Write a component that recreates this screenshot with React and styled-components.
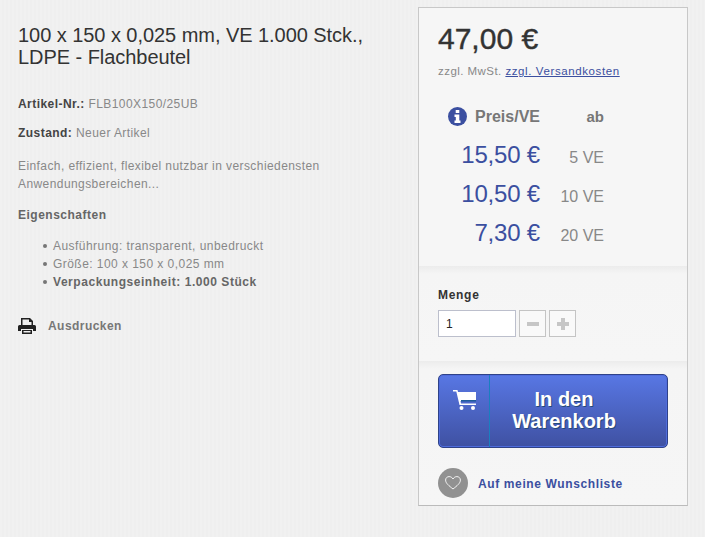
import React from "react";
import styled, { createGlobalStyle } from "styled-components";

const GlobalStyle = createGlobalStyle`
  html, body {
    margin: 0;
    padding: 0;
    height: 100%;
    overflow: hidden;
  }
  body {
    background: repeating-linear-gradient(90deg, #f1f1f1 0, #f1f1f1 2px, #efefef 2px, #efefef 4px);
    font-family: "Liberation Sans", Arial, sans-serif;
    color: #777;
  }
`;

const Page = styled.div`
  display: flex;
  align-items: flex-start;
  width: 705px;
  height: 537px;
  padding-top: 7px;
  box-sizing: border-box;
`;

const Details = styled.div`
  width: 400px;
  padding: 17px 0 0 18px;
  box-sizing: border-box;
`;

const Title = styled.h1`
  margin: 0 0 27px;
  font-size: 20px;
  line-height: 22px;
  font-weight: 400;
  letter-spacing: -0.05px;
  color: #333;
`;

const Line = styled.p`
  margin: 0 0 ${({ $gap }) => $gap || 11}px;
  font-size: 12px;
  line-height: 18px;
  letter-spacing: 0.42px;
  color: #888;
`;

const Strong = styled.strong`
  color: #444;
  letter-spacing: 0.45px;
`;

const Heading = styled.h4`
  margin: 0 0 13px;
  font-size: 12px;
  line-height: 18px;
  font-weight: 700;
  letter-spacing: 0.5px;
  color: #666;
`;

const List = styled.ul`
  margin: 0 0 27px;
  padding: 0 0 0 25px;
  list-style: none;
  font-size: 12px;
  line-height: 18px;
  letter-spacing: 0.45px;
  color: #888;
`;

const Item = styled.li`
  display: flex;
  align-items: center;
  gap: 6px;
  font-weight: ${({ $bold }) => ($bold ? 700 : 400)};
  letter-spacing: ${({ $bold }) => ($bold ? 0.55 : 0.45)}px;
  color: ${({ $bold }) => ($bold ? "#666" : "#888")};

  &::before {
    content: "";
    width: 4px;
    height: 4px;
    border-radius: 50%;
    background: #777;
  }
`;

const PrintRow = styled.div`
  display: flex;
  align-items: center;
  gap: 12px;
  font-size: 12px;
  font-weight: 700;
  letter-spacing: 0.45px;
  color: #777;
`;

const Panel = styled.aside`
  width: 270px;
  height: 499px;
  margin-left: 18px;
  box-sizing: border-box;
  border: 1px solid #c8c8c8;
  border-bottom-color: #bbb;
  background: #f6f6f6;
  overflow: hidden;
`;

const PriceBox = styled.section`
  height: 258px;
  padding: 14px 19px 0;
  box-sizing: border-box;
`;

const MainPrice = styled.div`
  font-size: 30px;
  line-height: 34px;
  font-weight: 400;
  color: #333;
  -webkit-text-stroke: 0.4px #333;
`;

const Tax = styled.div`
  margin-top: 7px;
  font-size: 11.5px;
  line-height: 16px;
  letter-spacing: 0.45px;
  color: #888;
`;

const TaxLink = styled.a`
  color: #3b4fa0;
  letter-spacing: 0.6px;
  text-decoration: underline;
`;

const PriceTable = styled.div`
  display: grid;
  grid-template-columns: 102px 64px;
  margin-top: 19px;
`;

const HeadPrice = styled.div`
  display: flex;
  align-items: center;
  justify-content: flex-end;
  gap: 8px;
  height: 37px;
  font-size: 16px;
  font-weight: 700;
  color: #777;
`;

const HeadQty = styled.div`
  height: 37px;
  line-height: 37px;
  text-align: right;
  font-size: 15px;
  font-weight: 700;
  color: #777;
`;

const TierPrice = styled.div`
  height: 39px;
  line-height: 39px;
  text-align: right;
  font-size: 24px;
  letter-spacing: -0.2px;
  color: #3b4fa0;
`;

const TierQty = styled.div`
  height: 39px;
  padding-top: 3px;
  box-sizing: border-box;
  line-height: 39px;
  text-align: right;
  font-size: 16px;
  color: #888;
`;

const QtyBox = styled.section`
  height: 95px;
  padding: 21px 19px 0;
  box-sizing: border-box;
  background: linear-gradient(180deg, #ececec 0, #f5f5f5 8px, #f6f6f6 100%);
`;

const QtyLabel = styled.label`
  display: block;
  font-size: 12px;
  line-height: 16px;
  font-weight: 700;
  letter-spacing: 0.7px;
  color: #333;
`;

const QtyRow = styled.div`
  display: flex;
  gap: 3px;
  margin-top: 7px;
`;

const QtyInput = styled.input`
  width: 78px;
  height: 27px;
  padding: 0 7px;
  box-sizing: border-box;
  border: 1px solid #bcbfcc;
  background: #fff;
  font-family: "Liberation Sans", Arial, sans-serif;
  font-size: 12px;
  color: #222;
  outline: none;
`;

const StepButton = styled.button`
  display: flex;
  align-items: center;
  justify-content: center;
  width: 27px;
  height: 27px;
  padding: 0;
  box-sizing: border-box;
  border: 1px solid #c4c4c4;
  background: #f9f9f9;
`;

const BuyBox = styled.section`
  height: 144px;
  padding: 13px 19px 0;
  box-sizing: border-box;
  background: linear-gradient(180deg, #ececec 0, #f5f5f5 8px, #f6f6f6 100%);
`;

const BuyButton = styled.button`
  display: flex;
  width: 230px;
  height: 74px;
  padding: 0;
  box-sizing: border-box;
  border: 1px solid #2f4288;
  border-radius: 5px;
  background: linear-gradient(180deg, #5877e4 0, #3f51a2 100%);
  box-shadow: inset 0 0 0 1px #4f6cdc;
  color: #fff;
  font-family: "Liberation Sans", Arial, sans-serif;
`;

const CartCell = styled.span`
  display: flex;
  justify-content: center;
  width: 51px;
  height: 100%;
  padding: 15px 0 0 1px;
  box-sizing: border-box;
  border-right: 1px solid #1a7fc0;
`;

const BuyLabel = styled.span`
  flex: 1;
  align-self: center;
  padding: 0 29px 2px 0;
  text-align: center;
  font-size: 20px;
  line-height: 22px;
  font-weight: 700;
  text-shadow: 1px 1px 0 #244a78;
`;

const WishRow = styled.div`
  display: flex;
  align-items: center;
  gap: 10px;
  margin-top: 20px;
`;

const WishIcon = styled.span`
  display: flex;
  align-items: center;
  justify-content: center;
  width: 30px;
  height: 30px;
  border-radius: 50%;
  background: #919191;
`;

const WishLink = styled.a`
  padding-top: 2px;
  font-size: 12px;
  font-weight: 700;
  letter-spacing: 0.62px;
  color: #3b4fa0;
`;

const PrinterIcon = () => (
  <svg width="18" height="16" viewBox="0 0 18 16">
    <path fill="#222" d="M3 0h9l3 3v4h-1.500V4H11V1.500H4.500V7H3z" />
    <path fill="#222" d="M1.500 7h15A1.500 1.500 0 0 1 18 8.500V13h-3v-2H3v2H0V8.500A1.500 1.500 0 0 1 1.500 7z" />
    <path fill="#222" d="M4 12h10v4H4zM5.500 13v1.500h7V13z" fillRule="evenodd" />
  </svg>
);

const InfoIcon = () => (
  <svg width="19" height="19" viewBox="0 0 19 19">
    <circle cx="9.500" cy="9.500" r="9.500" fill="#3b4fa0" />
    <rect x="7.700" y="3" width="3.600" height="3" fill="#fff" />
    <path fill="#fff" d="M6.500 7.500h4.800v6h1.200V16h-6v-2.500h1.300V10H6.500z" />
  </svg>
);

const CartIcon = () => (
  <svg width="24" height="21" viewBox="0 0 24 21">
    <path fill="#fff" d="M0 0h4.500l.5 2H23v9H7.500l.5 2.500h15V15H6.500L3.300 1.500H0z" />
    <path fill="#1f5c9a" d="M8 10h15v1.500H8z" />
    <circle cx="8.500" cy="18" r="2" fill="#fff" />
    <circle cx="20" cy="18" r="2" fill="#fff" />
  </svg>
);

const HeartIcon = () => (
  <svg width="16" height="14" viewBox="0 0 16 14">
    <path
      fill="none"
      stroke="#fff"
      strokeWidth="0.9"
      d="M8 13C4 9.800.6 7.200.6 4.100.6 2 2.200.6 4.100.6 5.700.6 7.200 1.500 8 3c.8-1.500 2.300-2.400 3.900-2.400 1.900 0 3.500 1.400 3.500 3.500C15.400 7.200 12 9.800 8 13z"
    />
  </svg>
);

const MinusIcon = () => (
  <svg width="12" height="12" viewBox="0 0 12 12">
    <rect x="0" y="4" width="12" height="4" fill="#c6c6c6" />
  </svg>
);

const PlusIcon = () => (
  <svg width="12" height="12" viewBox="0 0 12 12">
    <path fill="#c6c6c6" d="M4 0h4v4h4v4H8v4H4V8H0V4h4z" />
  </svg>
);

const tiers = [
  { price: "15,50 €", qty: "5 VE" },
  { price: "10,50 €", qty: "10 VE" },
  { price: "7,30 €", qty: "20 VE" },
];

export default function App() {
  return (
    <>
      <GlobalStyle />
      <Page>
        <Details>
          <Title>
            100 x 150 x 0,025 mm, VE 1.000 Stck.,
            <br />
            LDPE - Flachbeutel
          </Title>
          <Line>
            <Strong>Artikel-Nr.:</Strong> FLB100X150/25UB
          </Line>
          <Line $gap={15}>
            <Strong>Zustand:</Strong> Neuer Artikel
          </Line>
          <Line $gap={13}>
            Einfach, effizient, flexibel nutzbar in verschiedensten
            <br />
            Anwendungsbereichen...
          </Line>
          <Heading>Eigenschaften</Heading>
          <List>
            <Item>Ausführung: transparent, unbedruckt</Item>
            <Item>Größe: 100 x 150 x 0,025 mm</Item>
            <Item $bold>Verpackungseinheit: 1.000 Stück</Item>
          </List>
          <PrintRow>
            <PrinterIcon />
            Ausdrucken
          </PrintRow>
        </Details>
        <Panel>
          <PriceBox>
            <MainPrice>47,00 €</MainPrice>
            <Tax>
              zzgl. MwSt. <TaxLink href="#">zzgl. Versandkosten</TaxLink>
            </Tax>
            <PriceTable>
              <HeadPrice>
                <InfoIcon />
                Preis/VE
              </HeadPrice>
              <HeadQty>ab</HeadQty>
              {tiers.map((tier) => (
                <React.Fragment key={tier.qty}>
                  <TierPrice>{tier.price}</TierPrice>
                  <TierQty>{tier.qty}</TierQty>
                </React.Fragment>
              ))}
            </PriceTable>
          </PriceBox>
          <QtyBox>
            <QtyLabel>Menge</QtyLabel>
            <QtyRow>
              <QtyInput defaultValue="1" />
              <StepButton>
                <MinusIcon />
              </StepButton>
              <StepButton>
                <PlusIcon />
              </StepButton>
            </QtyRow>
          </QtyBox>
          <BuyBox>
            <BuyButton>
              <CartCell>
                <CartIcon />
              </CartCell>
              <BuyLabel>
                In den
                <br />
                Warenkorb
              </BuyLabel>
            </BuyButton>
            <WishRow>
              <WishIcon>
                <HeartIcon />
              </WishIcon>
              <WishLink>Auf meine Wunschliste</WishLink>
            </WishRow>
          </BuyBox>
        </Panel>
      </Page>
    </>
  );
}
